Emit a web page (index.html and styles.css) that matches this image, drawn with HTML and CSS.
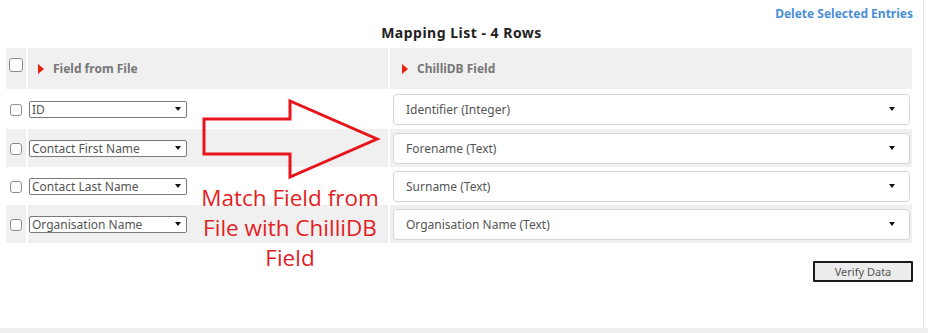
FILE: index.html
```html
<!DOCTYPE html>
<html>
<head lang="en">
    <title>Mapping List</title>
    <link rel="stylesheet" href="styles.css">
</head>
<body>
    <div class="page">
        <div class="toolbar">
            <a class="delete-link" href="#">Delete Selected Entries</a>
        </div>
        <div class="title">Mapping List - 4 Rows</div>

        <table class="mapping">
            <colgroup>
                <col class="col-check">
                <col class="col-file">
                <col class="col-db">
            </colgroup>
            <tr class="head">
                <td class="check"><span class="box box-head"></span></td>
                <td class="field"><span class="marker"></span>Field from File</td>
                <td class="field"><span class="marker"></span>ChilliDB Field</td>
            </tr>
            <tr class="row first">
                <td class="check"><span class="box"></span></td>
                <td><div class="pick pick-file"><span>ID</span><span class="caret"></span></div></td>
                <td><div class="pick pick-db"><span>Identifier (Integer)</span><span class="caret"></span></div></td>
            </tr>
            <tr class="row alt">
                <td class="check"><span class="box"></span></td>
                <td><div class="pick pick-file"><span>Contact First Name</span><span class="caret"></span></div></td>
                <td><div class="pick pick-db"><span>Forename (Text)</span><span class="caret"></span></div></td>
            </tr>
            <tr class="row">
                <td class="check"><span class="box"></span></td>
                <td><div class="pick pick-file"><span>Contact Last Name</span><span class="caret"></span></div></td>
                <td><div class="pick pick-db"><span>Surname (Text)</span><span class="caret"></span></div></td>
            </tr>
            <tr class="row alt">
                <td class="check"><span class="box"></span></td>
                <td><div class="pick pick-file"><span>Organisation Name</span><span class="caret"></span></div></td>
                <td><div class="pick pick-db"><span>Organisation Name (Text)</span><span class="caret"></span></div></td>
            </tr>
        </table>

        <div class="actions">
            <button class="verify">Verify Data</button>
        </div>

        <!-- annotation drawn over the table -->
        <svg class="arrow" width="928" height="333" viewBox="0 0 928 333">
            <polygon points="204,119 290,119 290,101 377,139 290,177 290,154 204,154"
                     fill="none" stroke="#e8141b" stroke-width="3" stroke-linejoin="miter"/>
        </svg>
        <div class="note">Match Field from<br>File with ChilliDB<br>Field</div>
    </div>
    <div class="foot"></div>
</body>
</html>
```

FILE: styles.css
```css
* {
    box-sizing: border-box;
}

body {
    margin: 0;
    font-family: "Noto Sans", Tahoma, sans-serif;
    font-size: 12px;
    color: #555;
    background: #fff;
}

.page {
    position: relative;
    width: 924px;
    height: 328px;
    border-right: 1px solid #e6e6e6;
}

.foot {
    height: 5px;
    background: #efefef;
}

.toolbar {
    display: flex;
    justify-content: flex-end;
    padding: 5px 10px 0 0;
    height: 24px;
}

.delete-link {
    color: #4a8fd4;
    text-decoration: none;
    font-weight: bold;
    font-size: 12px;
}

.title {
    text-align: center;
    font-weight: bold;
    font-size: 14px;
    letter-spacing: 0.5px;
    color: #222;
    height: 24px;
    line-height: 18px;
}

.mapping {
    margin-left: 4px;
    width: 910px;
    table-layout: fixed;
    border-collapse: separate;
    border-spacing: 2px 0;
}

.col-check {
    width: 20px;
}

.col-file {
    width: 360px;
}

.mapping td {
    padding: 0;
}

.head td {
    background: #f0f0f0;
    height: 41px;
}

.head .field {
    color: #777;
    font-weight: bold;
    padding-left: 10px;
}

.head .field + .field {
    padding-left: 12px;
}

.head .check {
    vertical-align: top;
    padding-top: 7px;
}

.marker {
    display: inline-block;
    width: 0;
    height: 0;
    border-top: 5px solid transparent;
    border-bottom: 5px solid transparent;
    border-left: 6px solid #e8200c;
    margin-right: 9px;
    vertical-align: -1px;
}

.check {
    text-align: center;
}

.box {
    display: inline-block;
    width: 12px;
    height: 12px;
    border: 1px solid #8d8d8d;
    border-radius: 3px;
    background: #fff;
    vertical-align: middle;
}

.box-head {
    width: 14px;
    height: 14px;
    margin-right: 1px;
}

.row td {
    height: 38px;
}

.first td {
    height: 40px;
}

.alt td {
    background: #f0f0f0;
}

.pick {
    display: flex;
    align-items: center;
    justify-content: space-between;
    background: #fff;
}

.pick-file {
    width: 158px;
    height: 17px;
    margin-left: 1px;
    padding: 0 5px 0 2px;
    border: 1px solid #7a7a7a;
    border-radius: 2px;
    color: #555;
}

.pick-db {
    width: 517px;
    height: 31px;
    margin-left: 3px;
    padding: 0 14px 0 12px;
    border: 1px solid #d6d6d6;
    border-radius: 4px;
    color: #555;
}

.caret {
    width: 0;
    height: 0;
    border-left: 3.5px solid transparent;
    border-right: 3.5px solid transparent;
    border-top: 4px solid #111;
}

.actions {
    display: flex;
    justify-content: flex-end;
    padding: 18px 10px 0 0;
}

.verify {
    width: 100px;
    height: 21px;
    font-family: "Noto Sans", Tahoma, sans-serif;
    font-size: 11px;
    color: #555;
    background: #ececec;
    border: 2px solid #1a1a1a;
    border-radius: 1px;
    padding: 0;
    cursor: pointer;
}

.arrow {
    position: absolute;
    left: 0;
    top: 0;
    pointer-events: none;
}

.note {
    position: absolute;
    left: 180px;
    top: 183px;
    width: 220px;
    text-align: center;
    font-family: "Open Sans", Lato, sans-serif;
    font-size: 22.5px;
    line-height: 30px;
    color: #e31e24;
}
```
